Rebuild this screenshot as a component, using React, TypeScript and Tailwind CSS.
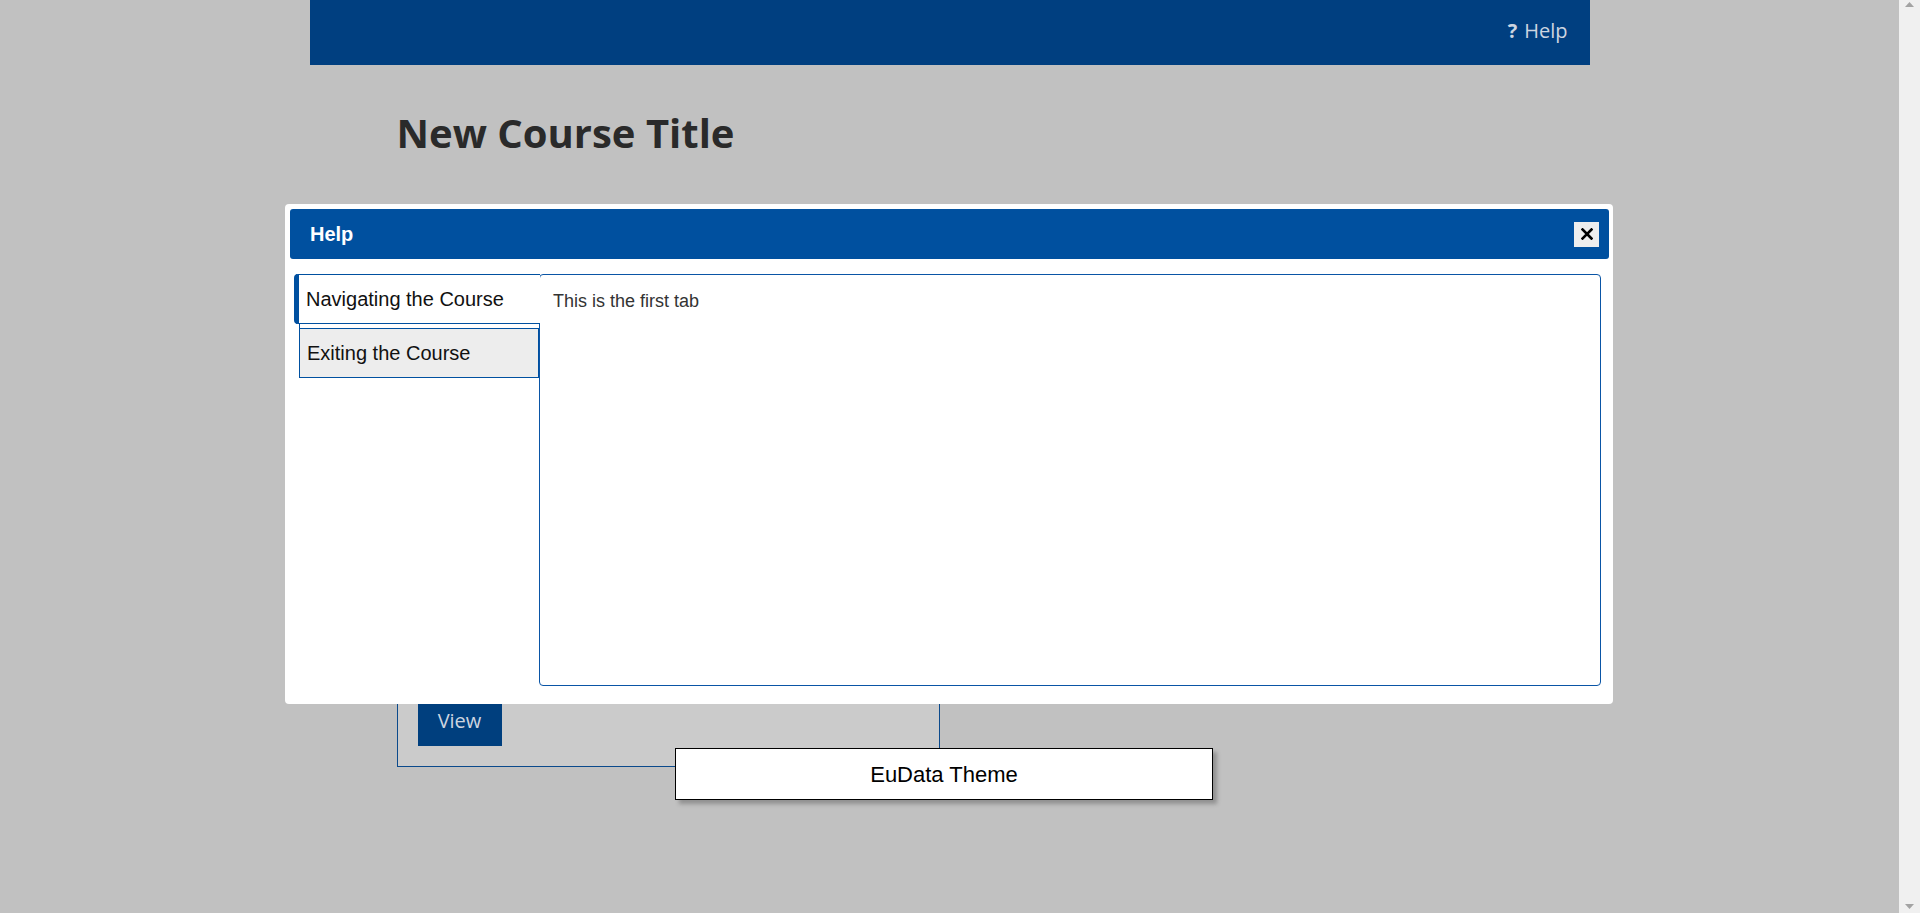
import { useState } from "react";

const tabs = [
  { id: "nav", label: "Navigating the Course", body: "This is the first tab" },
  { id: "exit", label: "Exiting the Course", body: "This is the second tab" },
];

const App = () => {
  const [active, setActive] = useState("nav");
  const current = tabs.find((t) => t.id === active) ?? tabs[0];

  return (
    <div className="flex h-[913px] w-full overflow-hidden font-['Open_Sans',sans-serif]">
      {/* Page (dimmed behind the dialog) */}
      <div className="relative flex-1 bg-[#c1c1c1]">
        <header className="mx-auto flex h-[65px] w-[1280px] items-center justify-end bg-[#003f80] pr-[22px] pb-[4px] text-[20px] text-[#cdd5e0]">
          <span className="mr-[7px] font-bold">?</span>
          <span>Help</span>
        </header>

        <div className="mx-auto w-[1280px] pl-[87px]">
          <h1 className="mt-[48px] text-[40px] leading-none font-bold text-[#2a2a2a]">
            New Course Title
          </h1>

          {/* Course card, mostly hidden by the dialog */}
          <div className="mt-[68px] flex h-[546px] w-[543px] flex-col justify-end border border-[#0b4a8c] bg-[#cbcbcb] px-[20px] pb-[20px]">
            <button className="h-[46px] w-[84px] bg-[#003f7e] pb-[4px] text-[20px] text-[#cdd5e0]">
              View
            </button>
          </div>
        </div>

        {/* Help dialog */}
        <div className="absolute top-[204px] left-[285px] flex h-[500px] w-[1328px] flex-col rounded-[4px] bg-white pt-[5px] pr-[4px] pl-[5px]">
          <div className="flex h-[50px] items-center justify-between rounded-[3px] bg-[#00509f] pr-[10px] pl-[20px]">
            <h2 className="font-['Liberation_Sans',Arial,sans-serif] text-[20px] font-bold text-white">
              Help
            </h2>
            <button className="flex h-[25px] w-[25px] items-center justify-center bg-[#eeeeee]">
              <svg width="12" height="12" viewBox="0 0 12 12">
                <path
                  d="M1.5 1.5 L10.5 10.5 M10.5 1.5 L1.5 10.5"
                  stroke="#000"
                  strokeWidth="2.6"
                  strokeLinecap="square"
                />
              </svg>
            </button>
          </div>

          <div className="mt-[15px] flex h-[412px] pr-[8px] pl-[4px] font-['Liberation_Sans',Arial,sans-serif]">
            <div className="w-[245px] shrink-0">
              {tabs.map((t, i) =>
                t.id === active ? (
                  <button
                    key={t.id}
                    onClick={() => setActive(t.id)}
                    className={`relative z-10 -mr-px flex h-[50px] w-[246px] items-center rounded-l-[4px] border-t border-b border-l-[5px] border-[#0050a0] bg-white pl-[7px] text-[20px] text-[#111] ${
                      i > 0 ? "mt-[5px]" : ""
                    }`}
                  >
                    {t.label}
                  </button>
                ) : (
                  <div key={t.id} className="ml-[5px] border-l border-[#0050a0] pt-[4px]">
                    <button
                      onClick={() => setActive(t.id)}
                      className="flex h-[50px] w-full items-center border-t border-r border-b border-[#0050a0] bg-[#ededed] pl-[7px] text-[20px] text-[#111]"
                    >
                      {t.label}
                    </button>
                  </div>
                )
              )}
            </div>
            <div className="flex-1 rounded-[4px] border border-[#0a55a6] px-[13px] pt-[13px] text-[18px] text-[#333]">
              {current.body}
            </div>
          </div>
        </div>

        {/* Theme label */}
        <div className="absolute top-[748px] left-[675px] flex h-[52px] w-[538px] items-center justify-center border-[1.5px] border-black bg-white font-['Liberation_Sans',Arial,sans-serif] text-[22px] text-black shadow-[4px_4px_4px_rgba(0,0,0,0.25)]">
          EuData Theme
        </div>
      </div>

      {/* Scrollbar */}
      <div className="flex w-[21px] flex-col items-center justify-between bg-[#f0f0f0] pt-[2px] pb-[4px]">
        <svg width="9" height="5" viewBox="0 0 9 5">
          <path d="M4.5 0 L9 5 L0 5 Z" fill="#a3a3a3" />
        </svg>
        <svg width="9" height="5" viewBox="0 0 9 5">
          <path d="M0 0 L9 0 L4.5 5 Z" fill="#a3a3a3" />
        </svg>
      </div>
    </div>
  );
};

export default App;
